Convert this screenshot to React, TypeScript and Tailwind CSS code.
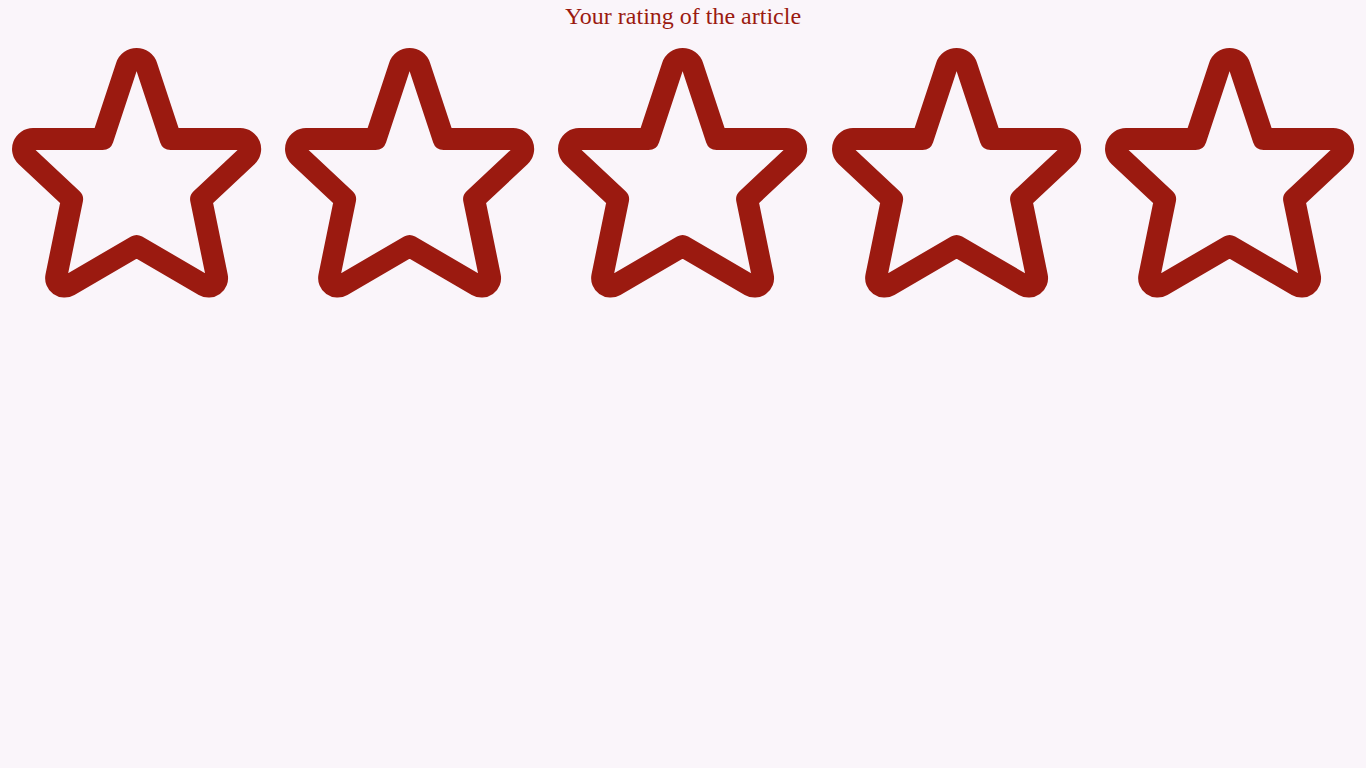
import React from "react";

// Centerline of the star outline: [x, y, corner radius]. Tips get a rounded
// corner, inner vertices rely on the stroke's round join.
const STAR_POINTS: [number, number, number][] = [
  [136.6, 4, 10.5],
  [102.6, 107, 0],
  [7.7, 107, 10],
  [72.1, 167.2, 0],
  [52.5, 263, 8.5],
  [136.6, 214, 0],
  [220.7, 263, 8.5],
  [201.1, 167.2, 0],
  [265.5, 107, 10],
  [170.6, 107, 0],
];

const buildStarPath = (pts: [number, number, number][]) => {
  const n = pts.length;
  const parts: string[] = [];
  pts.forEach(([x, y, r], i) => {
    const [px, py] = pts[(i - 1 + n) % n];
    const [nx, ny] = pts[(i + 1) % n];
    const inLen = Math.hypot(x - px, y - py);
    const outLen = Math.hypot(nx - x, ny - y);
    const ix = (x - px) / inLen;
    const iy = (y - py) / inLen;
    const ox = (nx - x) / outLen;
    const oy = (ny - y) / outLen;
    if (r <= 0) {
      parts.push(`${i === 0 ? "M" : "L"}${x.toFixed(2)} ${y.toFixed(2)}`);
      return;
    }
    const theta = Math.acos(Math.max(-1, Math.min(1, -ix * ox + -iy * oy)));
    const d = r / Math.tan(theta / 2);
    const sx = x - ix * d;
    const sy = y - iy * d;
    const ex = x + ox * d;
    const ey = y + oy * d;
    const sweep = ix * oy - iy * ox > 0 ? 1 : 0;
    parts.push(`${i === 0 ? "M" : "L"}${sx.toFixed(2)} ${sy.toFixed(2)}`);
    parts.push(`A${r} ${r} 0 0 ${sweep} ${ex.toFixed(2)} ${ey.toFixed(2)}`);
  });
  return parts.join(" ") + "Z";
};

const STAR_D = buildStarPath(STAR_POINTS);

const StarOutline: React.FC = () => (
  <svg className="block w-full h-auto" viewBox="0 0 273.2 273.2" fill="none" aria-hidden="true">
    <path d={STAR_D} stroke="#9b1a10" strokeWidth={22} strokeLinejoin="round" />
  </svg>
);

export default function App() {
  return (
    <div className="min-h-screen bg-[#faf5fa]">
      <h1 className="text-center text-2xl text-[#9b1a10] font-['Liberation_Serif',serif]">
        Your rating of the article
      </h1>
      <div className="flex">
        {[1, 2, 3, 4, 5].map((n) => (
          <button key={n} type="button" className="flex-1 min-w-0" aria-label={`Rate ${n} of 5`}>
            <StarOutline />
          </button>
        ))}
      </div>
    </div>
  );
}
